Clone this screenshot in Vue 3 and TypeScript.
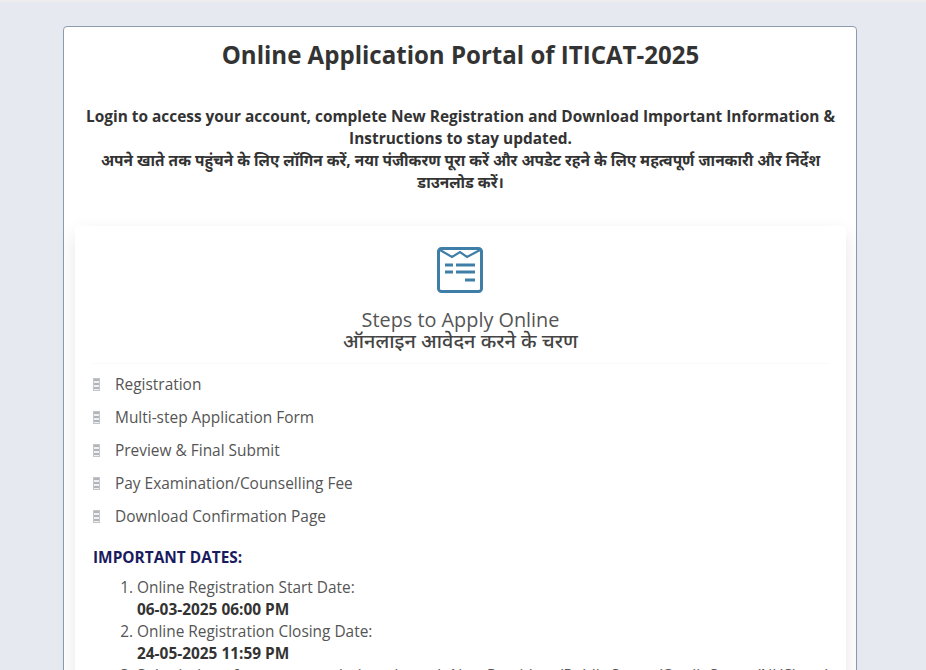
<script setup lang="ts">
const steps: string[] = [
  'Registration',
  'Multi-step Application Form',
  'Preview & Final Submit',
  'Pay Examination/Counselling Fee',
  'Download Confirmation Page',
]
const dates: { label: string; value: string }[] = [
  { label: 'Online Registration Start Date:', value: '06-03-2025 06:00 PM' },
  { label: 'Online Registration Closing Date:', value: '24-05-2025 11:59 PM' },
]
</script>

<template>
  <div class="page">
    <main class="panel">
      <h1 class="title">Online Application Portal of ITICAT-2025</h1>
      <p class="intro">
        Login to access your account, complete New Registration and Download Important Information &amp; Instructions to stay updated.<br />
        अपने खाते तक पहुंचने के लिए लॉगिन करें, नया पंजीकरण पूरा करें और अपडेट रहने के लिए महत्वपूर्ण जानकारी और निर्देश डाउनलोड करें।
      </p>
      <section class="card">
        <svg class="icon" width="46" height="46" viewBox="0 0 46 46" fill="none">
          <rect x="1.5" y="1.5" width="43" height="43" rx="3" stroke="#3f7ea6" stroke-width="3" />
          <path d="M3 3 L15 10 L23 5 L30 10 L43 3" stroke="#3f7ea6" stroke-width="2.2" />
          <path d="M8 18h8M19 18h19M8 25h8M19 25h19M28 33h10" stroke="#3f7ea6" stroke-width="3" />
        </svg>
        <h2 class="steps-title">Steps to Apply Online<br /><span class="hi">ऑनलाइन आवेदन करने के चरण</span></h2>
        <ul class="steps">
          <li v-for="s in steps" :key="s">{{ s }}</li>
        </ul>
        <h3 class="dates-title">IMPORTANT DATES:</h3>
        <ol class="dates">
          <li v-for="d in dates" :key="d.label">{{ d.label }}<br /><b>{{ d.value }}</b></li>
          <li>Submission of programme choices through New Providers (Public Sector/Credit Sector/NHS) and on the basis of merit</li>
        </ol>
      </section>
    </main>
  </div>
</template>

<style>
html, body { margin: 0; background: #e6e9ef; overflow: hidden; }
</style>

<style scoped>
.page {
  height: 670px;
  box-sizing: border-box;
  padding: 24px 69px 0 63px;
  background: #e6e9ef;
  border-top: 2px solid #eeeeee;
  overflow: hidden;
  font-family: "Open Sans", "Noto Sans", sans-serif;
  color: #3d3d3d;
}
.panel {
  box-sizing: border-box;
  height: 700px;
  background: #fff;
  border: 1px solid #8d9bb0;
  border-radius: 4px;
  padding: 10px 10px 0 11px;
}
.title {
  margin: 0;
  font-size: 24.05px;
  line-height: 36px;
  font-weight: 700;
  text-align: center;
  color: #333;
}
.intro {
  margin: 33px 0 0;
  font-size: 15.42px;
  line-height: 22px;
  font-weight: 700;
  text-align: center;
  color: #333;
}
.card {
  margin-top: 32px;
  padding: 21px 17px 0 18px;
  background: #fff;
  box-shadow: 0 8px 20px rgba(0, 0, 0, 0.1);
  border-radius: 4px;
  height: 500px;
}
.icon { display: block; margin: 0 0 0 calc(50% - 24px); }
.steps-title {
  margin: 16px 0 0 -1px;
  font-size: 19.85px;
  line-height: 21px;
  font-weight: 400;
  text-align: center;
  color: #555;
  padding-bottom: 12px;
  border-bottom: 1px solid #fafafa;
}
.hi { color: #444; font-weight: 500; }
.steps { list-style: none; margin: 4px 0 0; padding: 0; }
.steps li {
  font-size: 15.45px;
  line-height: 33px;
  color: #555;
  display: flex;
  align-items: center;
}
.steps li::before {
  content: "";
  box-sizing: border-box;
  width: 7px;
  height: 13px;
  margin-right: 15px;
  border: 1px solid #c2c6ca;
  background: repeating-linear-gradient(to bottom, #b0b5ba 0 2px, #eef0f2 2px 4px);
}
.dates-title {
  margin: 14px 0 0;
  font-size: 15.42px;
  line-height: 22px;
  font-weight: 700;
  color: #1a1a5e;
}
.dates {
  margin: 8px 0 0;
  padding-left: 44px;
  font-size: 15.42px;
  line-height: 22px;
  color: #555;
}
.dates b { color: #333; }
</style>
